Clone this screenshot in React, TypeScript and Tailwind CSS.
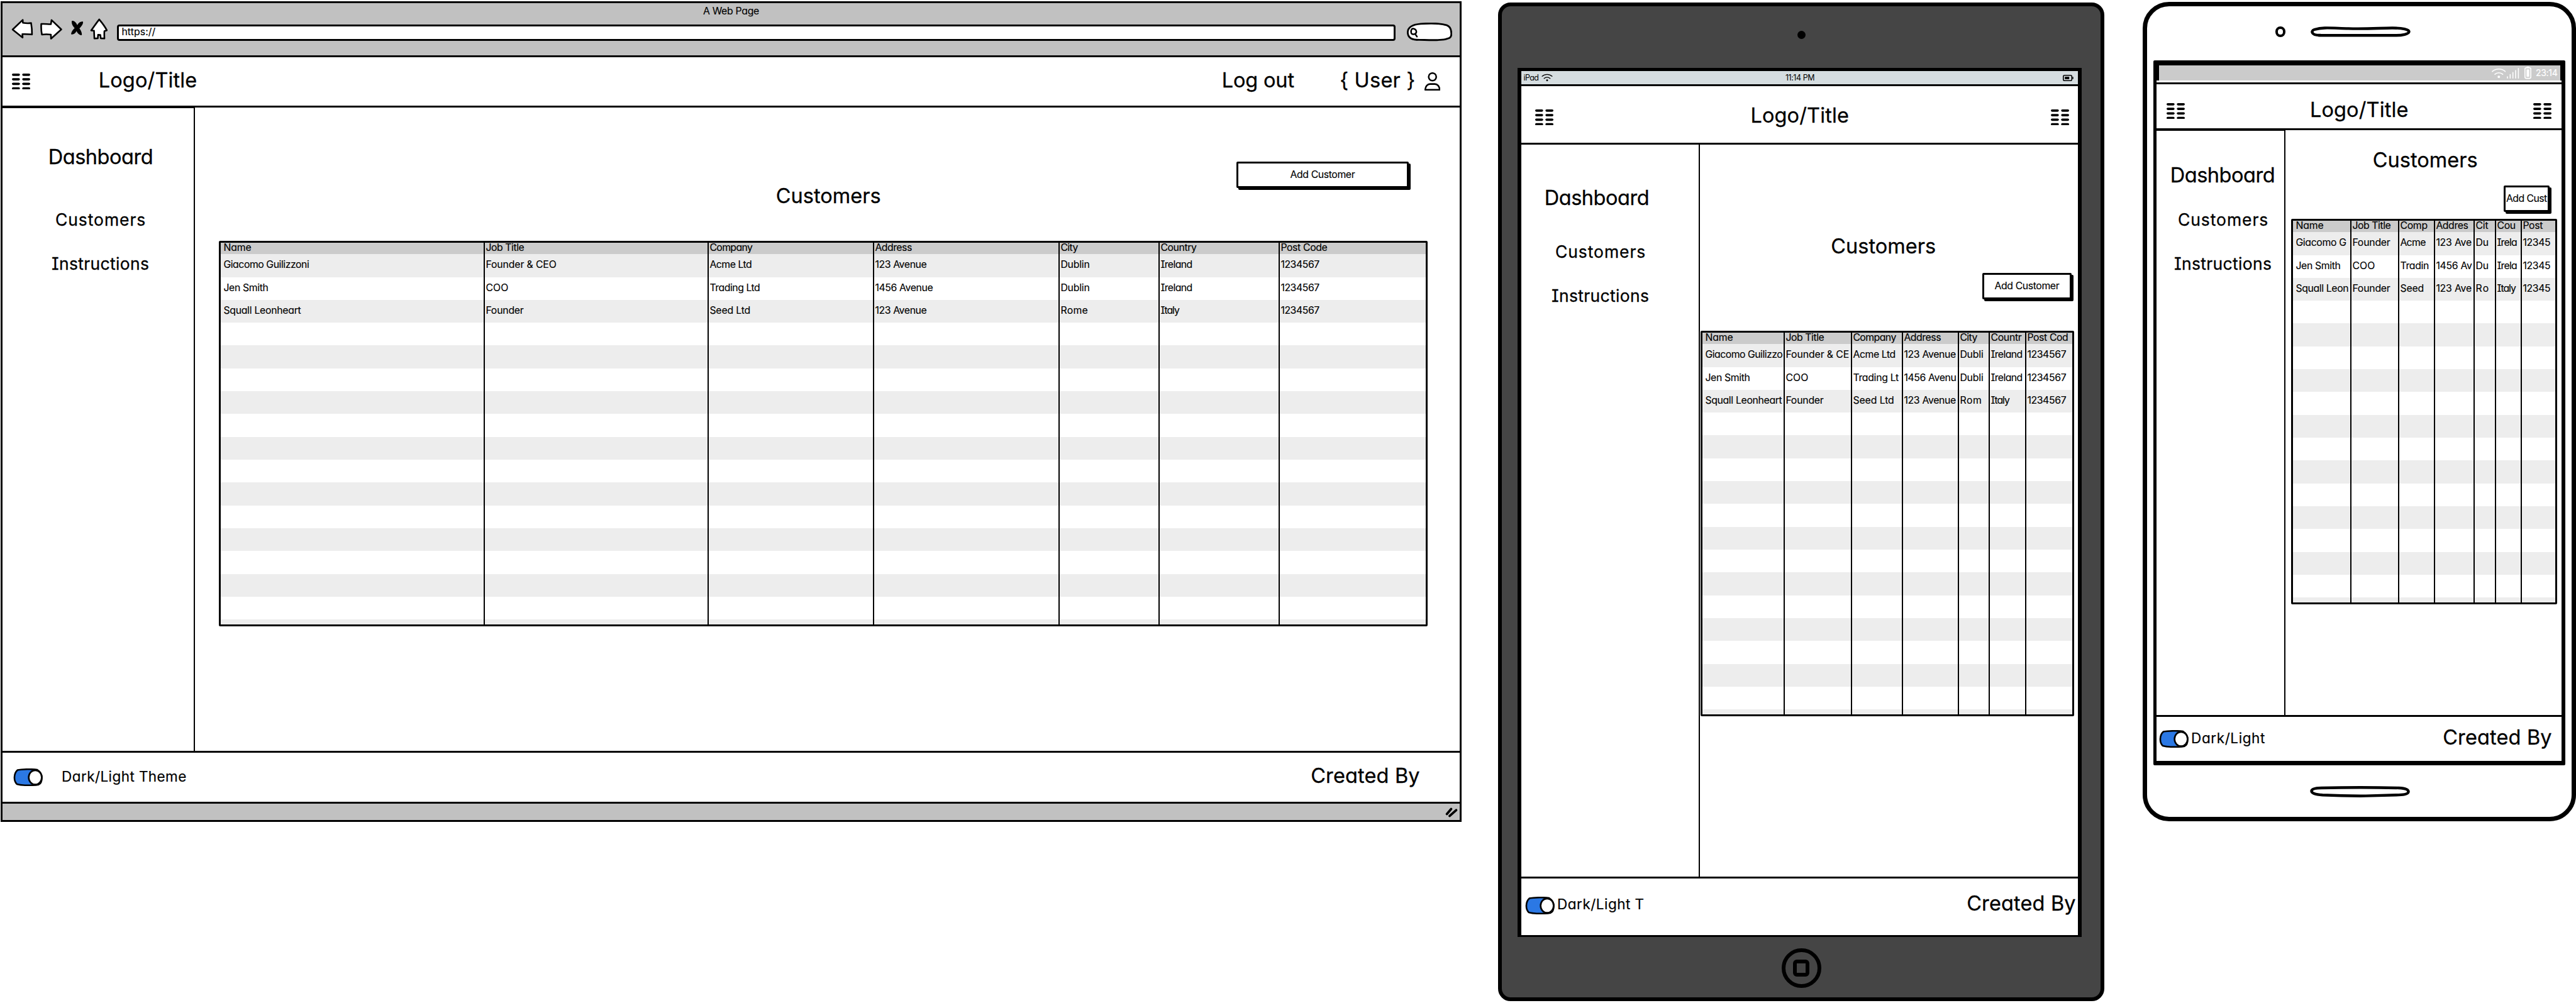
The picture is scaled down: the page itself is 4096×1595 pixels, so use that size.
import { useLayoutEffect, useRef } from "react";
import type { ReactNode } from "react";

/* ---------- text ---------- */

type TextProps = { children: string; w: number; className?: string };

/** One line of text whose tracking is adjusted so that it spans `w` pixels. */
function Text({ children, w, className = "" }: TextProps) {
  const ref = useRef<HTMLSpanElement>(null);
  useLayoutEffect(() => {
    const el = ref.current;
    if (!el) return;
    el.style.letterSpacing = "0px";
    const size = parseFloat(getComputedStyle(el).fontSize);
    const natural = el.getBoundingClientRect().width;
    const gaps = Math.max(children.length - 1, 1);
    el.style.letterSpacing = `${(w + size * 0.09 - natural) / gaps}px`;
  }, [children, w]);
  return (
    <span className={`block shrink-0 whitespace-pre ${className}`} style={{ width: w }}>
      <span ref={ref} className="-ml-[0.04em] inline-block">
        {children}
      </span>
    </span>
  );
}

const LARGE = "text-[32.5px] leading-[40px] [-webkit-text-stroke:0.3px_black]";
const MEDIUM = "text-[26.5px] leading-[40px] [-webkit-text-stroke:0.3px_black]";
const THEME = "text-[22.5px] leading-[28px] [-webkit-text-stroke:0.2px_black]";
const SMALL = "text-[15.8px] [-webkit-text-stroke:0.15px_black]";

/* ---------- icons ---------- */

function GridIcon({ className = "" }: { className?: string }) {
  return (
    <svg viewBox="0 0 48 42" className={`h-[25.4px] w-[29px] shrink-0 ${className}`}>
      {[0, 12, 24, 36].map((y) => (
        <g key={y}>
          <rect x="0" y={y} width="21" height="6" rx="3" />
          <rect x="27" y={y} width="21" height="6" rx="3" />
        </g>
      ))}
    </svg>
  );
}

function Toggle({ className = "" }: { className?: string }) {
  return (
    <svg viewBox="42 1194 95 108" preserveAspectRatio="none" className={`h-[28px] w-[47px] shrink-0 ${className}`}>
      <g stroke="#000" strokeWidth="2.6">
        <path
          vectorEffect="non-scaling-stroke"
          fill="#2b78e4"
          d="M56 1204C72 1198 104 1197 119 1202C129 1214 134 1232 134 1250C134 1272 130 1288 124 1293C108 1299 72 1300 54 1290C43 1272 43 1226 56 1204Z"
        />
        <ellipse vectorEffect="non-scaling-stroke" fill="#fff" cx="112.8" cy="1249" rx="21" ry="44" />
      </g>
    </svg>
  );
}

function UserIcon() {
  return (
    <svg viewBox="303 450 126 144" className="ml-[16px] h-[29px] w-[25.4px] shrink-0" fill="none" stroke="#000" strokeWidth="12.5" strokeLinejoin="round">
      <circle cx="366" cy="486" r="30" />
      <path d="M309 588C310 561 327 542.5 347 542.5H385C405 542.5 422 561 423 588Z" />
    </svg>
  );
}

function NavIcons() {
  const outline = { fill: "#fff", stroke: "#000", strokeWidth: 13, strokeLinejoin: "round" as const };
  return (
    <div className="ml-[14px] flex w-[168px] shrink-0">
      <svg viewBox="90 82 174 170" className="h-[34.3px] w-[35.1px]">
        <path {...outline} d="M100 171L180 95L181 118C203 122 227 122 246 120C251 150 254 180 253 210C230 206 202 207 177 207L179 234Z" />
      </svg>
      <svg viewBox="312 82 180 170" className="ml-[9.7px] h-[34.3px] w-[36.3px]">
        <path {...outline} d="M483 170L406 96L401 129C380 130 350 124 325 127C323 155 325 185 330 211C352 208 378 208 401 211L402 243Z" />
      </svg>
      <svg viewBox="558 82 106 170" className="ml-[13.3px] h-[34.3px] w-[21.4px]">
        <path d="M569 103C588 97 606 122 612 136C622 116 640 105 657 109C661 124 644 148 629 162C640 176 650 196 648 215C630 219 613 199 606 184C598 200 582 214 564 209C562 192 578 172 591 160C578 146 564 124 569 103Z" />
      </svg>
      <svg viewBox="708 82 142 170" className="ml-[8.9px] h-[34.3px] w-[28.7px]">
        <path {...outline} d="M781 91C802 116 826 146 841 177L822 183C820 201 821 220 822 241L793 240L790 214L772 213L770 240L743 241C742 220 741 200 740 180L718 178C740 148 760 117 781 91Z" />
      </svg>
    </div>
  );
}

function SearchPill() {
  return (
    <svg viewBox="165 58 358 148" className="ml-[18px] mt-[7px] h-[29.9px] w-[72.2px] shrink-0" stroke="#000" strokeWidth="14" strokeLinecap="round">
      <path fill="#fff" d="M240 194C195 190 172 168 172 134C172 92 215 72 275 67C350 62 430 62 480 78C507 88 516 120 516 146C516 178 500 182 470 189C410 202 330 194 240 192Z" />
      <path fill="none" d="M203 110C214 100 238 108 240 128C242 150 206 158 199 138C197 128 198 117 203 110ZM232 150L245 168" strokeWidth="12" />
    </svg>
  );
}

function Wifi({ className }: { className: string }) {
  return (
    <svg viewBox="136 144 112 84" className={className} fill="none" stroke="currentColor" strokeWidth="8" strokeLinecap="round">
      <path d="M141 172C170 146 214 146 243 172M161 194C178 178 206 178 223 194" />
      <circle cx="192" cy="214" r="9.5" fill="currentColor" stroke="none" />
    </svg>
  );
}

/* ---------- shared pieces ---------- */

function Button({ label, w, className }: { label: string; w: number; className: string }) {
  return (
    <div className={`flex h-[42px] shrink-0 items-center justify-center rounded-[2px] border-[3px] border-black bg-white shadow-[3px_3px_0_#000] ${className}`}>
      <Text w={w} className={`${SMALL} leading-[20px]`}>{label}</Text>
    </div>
  );
}

type Cell = [string, number];
type Column = { width: number; cells: [Cell, Cell, Cell, Cell] };

const ROWS = Array.from({ length: 17 }, (_, i) => i);

function Table({ columns, className }: { columns: Column[]; className: string }) {
  return (
    <div className={`flex h-[613px] shrink-0 overflow-hidden rounded-[2px] border-[3px] border-black ${className}`}>
      {columns.map(({ width, cells }, c) => (
        <div key={c} style={{ width }} className={`flex shrink-0 flex-col border-black ${c ? "border-l-2" : ""}`}>
          <div className={`h-[18.2px] shrink-0 bg-[#cbcbcb] ${c ? "pl-[2px]" : "pl-[5px]"}`}>
            <Text w={cells[0][1]} className={`${SMALL} leading-[16px]`}>{cells[0][0]}</Text>
          </div>
          {ROWS.map((r) => (
            <div key={r} className={`h-[36.323px] shrink-0 ${c ? "pl-[2px]" : "pl-[5px]"} ${r % 2 ? "bg-white" : "bg-[#ededed]"}`}>
              {r < 3 && <Text w={cells[r + 1][1]} className={`${SMALL} leading-[34px]`}>{cells[r + 1][0]}</Text>}
            </div>
          ))}
        </div>
      ))}
    </div>
  );
}

const WIDE: Column[] = [
  { width: 418, cells: [["Name", 43], ["Giacomo Guilizzoni", 135], ["Jen Smith", 70], ["Squall Leonheart", 122]] },
  { width: 356, cells: [["Job Title", 60], ["Founder & CEO", 111], ["COO", 34.5], ["Founder", 59]] },
  { width: 263, cells: [["Company", 67], ["Acme Ltd", 66], ["Trading Ltd", 79], ["Seed Ltd", 63.5]] },
  { width: 295, cells: [["Address", 57.5], ["123 Avenue", 81], ["1456 Avenue", 91], ["123 Avenue", 81]] },
  { width: 159, cells: [["City", 26.5], ["Dublin", 45], ["Dublin", 45], ["Rome", 42]] },
  { width: 191, cells: [["Country", 56], ["Ireland", 49.5], ["Ireland", 49.5], ["Italy", 29]] },
  { width: 234, cells: [["Post Code", 73], ["1234567", 60.5], ["1234567", 60.5], ["1234567", 60.5]] },
];

const MIDDLE: Column[] = [
  { width: 129, cells: [["Name", 43], ["Giacomo Guilizzo", 122], ["Jen Smith", 70], ["Squall Leonheart", 121]] },
  { width: 107, cells: [["Job Title", 60], ["Founder & CE", 99.5], ["COO", 34.5], ["Founder", 59]] },
  { width: 81, cells: [["Company", 67.5], ["Acme Ltd", 66.5], ["Trading Lt", 71.5], ["Seed Ltd", 64]] },
  { width: 89, cells: [["Address", 57.8], ["123 Avenue", 81.5], ["1456 Avenu", 82], ["123 Avenue", 81.5]] },
  { width: 49, cells: [["City", 26.5], ["Dubli", 36], ["Dubli", 36], ["Rom", 33]] },
  { width: 58, cells: [["Countr", 48], ["Ireland", 49.5], ["Ireland", 49.5], ["Italy", 29]] },
  { width: 75, cells: [["Post Cod", 64], ["1234567", 60.8], ["1234567", 60.8], ["1234567", 60.8]] },
];

const NARROW: Column[] = [
  { width: 91, cells: [["Name", 43], ["Giacomo G", 79.2], ["Jen Smith", 70], ["Squall Leon", 82.8]] },
  { width: 76, cells: [["Job Title", 60], ["Founder", 59], ["COO", 34.5], ["Founder", 59]] },
  { width: 57, cells: [["Comp", 42.3], ["Acme", 39.6], ["Tradin", 44.6], ["Seed", 36.5]] },
  { width: 63, cells: [["Addres", 50], ["123 Ave", 55.4], ["1456 Av", 56], ["123 Ave", 55.4]] },
  { width: 34, cells: [["Cit", 19], ["Du", 19.4], ["Du", 19.4], ["Ro", 19.4]] },
  { width: 41, cells: [["Cou", 28.4], ["Irela", 31], ["Irela", 31], ["Italy", 29]] },
  { width: 55, cells: [["Post", 30.6], ["12345", 42.8], ["12345", 42.8], ["12345", 42.8]] },
];

function Sidebar({ className, children }: { className: string; children: ReactNode }) {
  return <nav className={`flex shrink-0 flex-col border-r-2 border-black ${className}`}>{children}</nav>;
}

/* ---------- devices ---------- */

function Browser() {
  return (
    <section className="ml-px mt-[2px] flex h-[1305px] w-[2323px] shrink-0 flex-col border-[3px] border-black bg-white">
      <div className="h-[86px] shrink-0 border-b-[3px] border-black bg-[#c1c1c1]">
        <div className="flex h-[24px] justify-center pt-[2px]">
          <Text w={88} className={`${SMALL} leading-[22px]`}>A Web Page</Text>
        </div>
        <div className="flex items-start">
          <NavIcons />
          <div className="mt-[10px] flex h-[26px] w-[2033px] shrink-0 items-center rounded-[4px] border-[3px] border-black bg-white pl-[5px]">
            <Text w={52.5} className={`${SMALL} mb-[2px] leading-[20px]`}>https://</Text>
          </div>
          <SearchPill />
        </div>
      </div>
      <header className="flex h-[80px] shrink-0 items-center border-b-[3px] border-black pl-[15px] pr-[31px]">
        <GridIcon />
        <Text w={153.6} className={`${LARGE} mb-1 ml-[110px]`}>Logo/Title</Text>
        <Text w={112.4} className={`${LARGE} mb-1 ml-auto`}>Log out</Text>
        <Text w={117.2} className={`${LARGE} mb-1 ml-[75px]`}>{"{ User }"}</Text>
        <UserIcon />
      </header>
      <div className="flex h-[1023px] shrink-0">
        <Sidebar className="w-[306px] border-t pt-[58px]">
          <Text w={164} className={`${LARGE} ml-[74px]`}>Dashboard</Text>
          <Text w={141} className={`${MEDIUM} ml-[85px] mt-[59px]`}>Customers</Text>
          <Text w={152.6} className={`${MEDIUM} ml-[79px] mt-[30px]`}>Instructions</Text>
        </Sidebar>
        <main className="flex flex-1 flex-col">
          <Button label="Add Customer" w={101.6} className="ml-auto mr-[81px] mt-[86px] w-[274px]" />
          <Text w={164} className="ml-[925px] text-[32.5px] leading-[26px] [-webkit-text-stroke:0.3px_black]">Customers</Text>
          <Table columns={WIDE} className="ml-[38px] mt-[58px] w-[1922px]" />
        </main>
      </div>
      <footer className="flex h-[84px] shrink-0 items-center border-y-[3px] border-black pl-[17px] pr-[65px]">
        <Toggle />
        <Text w={196.2} className={`${THEME} mb-[3px] ml-[31px]`}>Dark/Light Theme</Text>
        <Text w={170.5} className={`${LARGE} mb-1 ml-auto`}>Created By</Text>
      </footer>
      <div className="flex flex-1 items-center justify-end bg-[#c1c1c1] pr-[3px]">
        <svg viewBox="0 0 32 26" className="mb-[-2px] h-[16px] w-[20px]" stroke="#000" strokeWidth="6" strokeLinecap="round">
          <path d="M4 17L15 4M11 22L28 7" />
        </svg>
      </div>
    </section>
  );
}

function Tablet() {
  return (
    <section className="ml-[58px] mt-[4px] flex h-[1588px] w-[964px] shrink-0 flex-col rounded-[20px] border-[6px] border-black bg-[#454545]">
      <div className="mt-[39px] size-[13px] shrink-0 self-center rounded-full bg-black" />
      <div className="ml-[25px] mt-[46px] flex h-[1382px] w-[897px] shrink-0 flex-col border-x-[6px] border-b-[3px] border-t-[5px] border-black bg-white">
        <div className="flex h-[24px] shrink-0 items-center border-b-[3px] border-black bg-[#d5dde0] pl-[4px] pr-[7px]">
          <Text w={23.4} className="text-[12.5px] leading-[20px]">iPad</Text>
          <Wifi className="ml-[5px] h-[13px] w-[18px]" />
          <Text w={45.6} className="ml-[370px] text-[12.5px] leading-[20px]">11:14 PM</Text>
          <svg viewBox="0 0 34 20" className="ml-auto h-[10px] w-[17px]">
            <rect x="1.6" y="1.6" width="27" height="16.8" rx="4" fill="none" stroke="#000" strokeWidth="3.2" />
            <rect x="6.5" y="6" width="14" height="8" />
            <rect x="30.5" y="6" width="3" height="8" rx="1.5" />
          </svg>
        </div>
        <header className="flex h-[93px] shrink-0 items-center justify-between border-b-[3px] border-black pl-[22px] pr-[14px]">
          <GridIcon className="mt-[9px]" />
          <Text w={153.6} className={`${LARGE} mr-2 mt-1`}>Logo/Title</Text>
          <GridIcon className="mt-[9px]" />
        </header>
        <div className="flex h-[1164px] shrink-0">
          <Sidebar className="w-[284px] pt-[65px]">
            <Text w={164} className={`${LARGE} ml-[38px]`}>Dashboard</Text>
            <Text w={141} className={`${MEDIUM} ml-[55px] mt-[45px]`}>Customers</Text>
            <Text w={152.6} className={`${MEDIUM} ml-[49px] mt-[30px]`}>Instructions</Text>
          </Sidebar>
          <main className="flex flex-1 flex-col">
            <Text w={164} className={`${LARGE} ml-[209.5px] mt-[142px]`}>Customers</Text>
            <Button label="Add Customer" w={101.6} className="ml-auto mr-[10px] mt-[22px] w-[142px]" />
            <Table columns={MIDDLE} className="ml-px mt-[50px] w-[594px]" />
          </main>
        </div>
        <footer className="flex h-[93px] shrink-0 items-center border-t-[3px] border-black pl-[6px] pr-[5px]">
          <Toggle className="mb-[5px]" />
          <Text w={136} className={`${THEME} mb-2 ml-[5px]`}>Dark/Light T</Text>
          <Text w={170.5} className={`${LARGE} mb-[10px] ml-auto`}>Created By</Text>
        </footer>
      </div>
      <div className="mt-[18px] flex size-[63px] shrink-0 items-center justify-center self-center rounded-full border-[6px] border-black">
        <div className="h-[27px] w-[26px] rounded-[6px] border-[6px] border-black" />
      </div>
    </section>
  );
}

function Phone() {
  return (
    <section className="ml-[61px] mt-[3px] flex h-[1303px] w-[689px] shrink-0 flex-col rounded-[42px] border-[7px] border-black bg-white">
      <div className="mt-[32px] flex h-[17px] shrink-0">
        <div className="ml-[204px] h-[17px] w-[16px] rounded-full border-[4px] border-black" />
        <svg viewBox="0 0 159 17" className="ml-[40px] h-[17px] w-[159px]" fill="#fff" stroke="#000" strokeWidth="4.4">
          <path d="M14 14C1 14 0 7 6 5C20 1 30 2.5 60 3.4C90 4.2 110 2.6 130 2.5C146 2.5 157 5 156.5 8.5C156 12 146 14.5 134 14.2H14Z" />
        </svg>
      </div>
      <div className="ml-[10px] mt-[37px] flex h-[1121px] w-[655px] shrink-0 flex-col rounded-[2px] border-b-[7px] border-l-[5px] border-r-[6px] border-t-[8px] border-black">
        <div className="flex h-[24px] shrink-0 items-center border-l-4 border-r-2 border-black bg-[#cbcbcb] pr-[5px] text-white">
          <Wifi className="ml-auto h-[17px] w-[22.6px]" />
          <svg viewBox="258 144 96 84" className="ml-[2px] h-[17px] w-[19.4px]" stroke="currentColor" strokeWidth="8" strokeLinecap="round">
            <path d="M263 213V224M284.5 196V224M306 180V224M327.5 164V224M349 148V224" />
          </svg>
          <svg viewBox="393 138 54 96" className="ml-[8px] h-[19.4px] w-[11px]">
            <rect x="397" y="147" width="46" height="83" rx="10" fill="none" stroke="currentColor" strokeWidth="8" />
            <rect x="409" y="138" width="22" height="9" rx="4" fill="currentColor" />
            <rect x="409" y="159" width="22" height="59" fill="currentColor" />
          </svg>
          <Text w={33.5} className="ml-[8px] text-[14px] leading-[20px] [-webkit-text-stroke:0.2px_white]">23:14</Text>
        </div>
        <header className="mt-[3px] flex h-[76px] shrink-0 items-center justify-between border-y-[3px] border-black px-[16px]">
          <GridIcon className="mt-[15px]" />
          <Text w={153.6} className={`${LARGE} mt-[11px]`}>Logo/Title</Text>
          <GridIcon className="mt-[15px]" />
        </header>
        <div className="flex h-[930px] shrink-0">
          <Sidebar className="w-[205px] border-t pt-[51px]">
            <Text w={164} className={`${LARGE} ml-[23px]`}>Dashboard</Text>
            <Text w={141} className={`${MEDIUM} ml-[35px] mt-[30px]`}>Customers</Text>
            <Text w={152.6} className={`${MEDIUM} ml-[29px] mt-[30px]`}>Instructions</Text>
          </Sidebar>
          <main className="flex flex-1 flex-col">
            <Text w={164} className={`${LARGE} ml-[140px] mt-[28px]`}>Customers</Text>
            <Button label="Add Cust" w={63.9} className="ml-auto mr-[19px] mt-[20px] w-[73px]" />
            <Table columns={NARROW} className="ml-[9px] mt-[11px] w-[423px]" />
          </main>
        </div>
        <footer className="flex h-[73px] shrink-0 items-center border-t-[3px] border-black pl-[4px] pr-[17px]">
          <Toggle />
          <Text w={115.2} className={`${THEME} mb-[3px] ml-[5px]`}>Dark/Light</Text>
          <Text w={170.5} className={`${LARGE} mb-1 ml-auto`}>Created By</Text>
        </footer>
      </div>
      <svg viewBox="0 0 159 18" className="ml-[259px] mt-[33px] h-[18px] w-[159px] shrink-0" fill="#fff" stroke="#000" strokeWidth="4.4">
        <path d="M18 3C60 2 100 2 141 3C153 3.5 157 6 156.5 9.5C156 13 148 14 137 14.3C115 15 98 15.5 80 15.8C60 15.5 40 15 20 14.3C8 13.5 2.5 11 2.5 8C2.5 4.5 8 3.2 18 3Z" />
      </svg>
    </section>
  );
}

export default function App() {
  return (
    <div className="flex h-[1595px] w-[4096px] items-start overflow-hidden bg-white font-['Inter','Lato',sans-serif] text-black [font-feature-settings:'cv11','cv08','calt'_0]">
      <Browser />
      <Tablet />
      <Phone />
    </div>
  );
}
